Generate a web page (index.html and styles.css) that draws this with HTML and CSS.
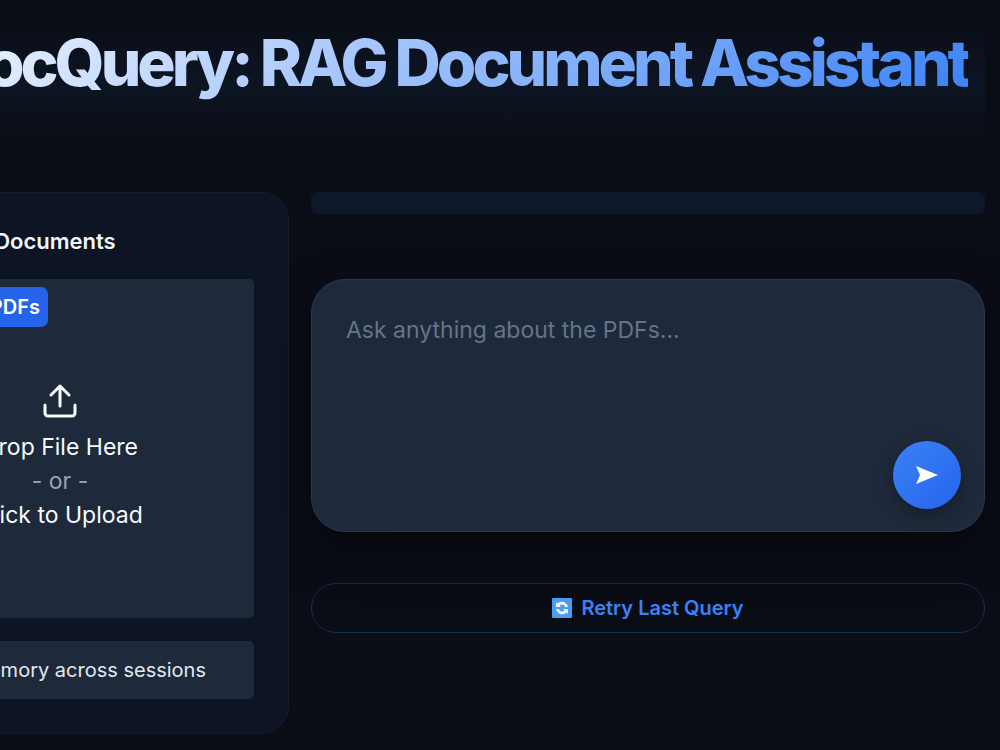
FILE: index.html
```html
<!DOCTYPE html>
<html lang="en">
<head>
    <meta charset="UTF-8">
    <meta name="viewport" content="width=device-width, initial-scale=1.0">
    <title>DocQuery</title>
    <link rel="stylesheet" href="styles.css">
</head>
<body>

<div class="app">
    <header class="hero">
        <h1>DocQuery: RAG Document Assistant</h1>
    </header>

    <div class="columns">
        <!-- Documents panel -->
        <section class="panel">
            <h2>Upload Documents</h2>
            <div class="dropzone">
                <span class="tag">Upload PDFs</span>
                <button class="drop-button" type="button">
                    <svg class="upload-icon" viewBox="0 0 34 34" fill="none" stroke="currentColor" stroke-width="3" stroke-linecap="round" stroke-linejoin="round">
                        <path d="M17 22V3M8 11l9-9 9 9M2 21v8a3 3 0 0 0 3 3h24a3 3 0 0 0 3-3v-8"/>
                    </svg>
                    <span>Drop File Here</span>
                    <span class="or">- or -</span>
                    <span>Click to Upload</span>
                </button>
            </div>
            <label class="memory">
                <input type="checkbox">
                <span>Enable memory across sessions</span>
            </label>
        </section>

        <!-- Chat -->
        <main class="chat">
            <div class="answer"></div>
            <div class="composer">
                <textarea placeholder="Ask anything about the PDFs..." aria-label="Question"></textarea>
                <button class="send" type="button" aria-label="Send">
                    <svg viewBox="0 0 22 18"><path d="M0 0L22 9L0 18Q2 14 4 9Q2 4 0 0Z" fill="#fff"/></svg>
                </button>
            </div>
            <button class="retry" type="button">
                <svg class="retry-icon" viewBox="0 0 20 20">
                    <rect width="20" height="20" rx="1" fill="#4a9df0"/>
                    <path d="M4 4v5h5L7.500 7.500C9 6 12 6 13 9h3C15 4 9 2 5.500 5.500ZM16 16v-5h-5l1.500 1.500C11 14 8 14 7 11H4c1 5 7 7 10.500 3.500Z" fill="#eef6ff"/>
                </svg>
                <span>Retry Last Query</span>
            </button>
        </main>
    </div>
</div>

</body>
</html>
```
FILE: styles.css
```css
* {
    box-sizing: border-box;
}
body {
    margin: 0;
    min-height: 100vh;
    overflow: hidden;
    font-family: Inter, sans-serif;
    background-color: #0a0d16;
    color: #f1f5f9;
}
button, textarea {
    font-family: inherit;
}
button {
    cursor: pointer;
}
.app {
    margin: 0 15px 0 -169px;
}
.hero {
    height: 192px;
    padding: 24px 17px 0;
    background: linear-gradient(transparent 20px, #0d1523 86px, transparent 142px);
}
.hero h1 {
    margin: 0;
    font-size: 64px;
    line-height: 78px;
    font-weight: 800;
    letter-spacing: -4px;
    text-align: right;
    white-space: nowrap;
    color: transparent;
    background: linear-gradient(135deg, #ffffff, #3b82f6);
    background-clip: text;
    -webkit-background-clip: text;
}
.columns {
    display: flex;
    align-items: flex-start;
    gap: 22px;
}
.panel {
    flex: 0 0 458px;
    display: flex;
    flex-direction: column;
    padding: 34px;
    border: 1px solid #151d2c;
    border-radius: 28px;
    background-color: #0d1424;
}
.panel h2 {
    margin: 0 0 24px;
    padding-left: 47px;
    font-size: 22px;
    line-height: 28px;
    font-weight: 600;
}
.dropzone {
    position: relative;
    display: flex;
    height: 339px;
    border-radius: 5px;
    background-color: #1e293b;
}
.tag {
    position: absolute;
    top: 8px;
    left: 8px;
    padding: 0 8px 0 42px;
    border-radius: 7px;
    font-size: 20px;
    line-height: 40px;
    font-weight: 600;
    color: #fff;
    background-color: #2563eb;
}
.drop-button {
    flex: 1;
    display: flex;
    flex-direction: column;
    align-items: center;
    justify-content: center;
    padding: 18px 0 0;
    border: none;
    background: none;
    color: #f8fafc;
    font-size: 23px;
    line-height: 34px;
}
.upload-icon {
    width: 34px;
    height: 34px;
    margin-bottom: 12px;
}
.or {
    color: #94a3b8;
}
.memory {
    display: flex;
    align-items: center;
    gap: 8px;
    margin-top: 23px;
    padding: 0 8px;
    height: 58px;
    border-radius: 5px;
    font-size: 20px;
    white-space: nowrap;
    color: #e2e8f0;
    background-color: #1e293b;
}
.memory input {
    width: 20px;
    height: 20px;
    margin: 0;
}
.chat {
    flex: 1;
    display: flex;
    flex-direction: column;
}
.answer {
    height: 22px;
    border-radius: 6px;
    background-color: #0f172a;
}
.composer {
    position: relative;
    display: flex;
    margin: 65px 0 51px;
    border-radius: 34px;
    box-shadow: 0 20px 50px rgba(0, 0, 0, 0.4);
}
.composer textarea {
    flex: 1;
    height: 253px;
    padding: 34px;
    border: 1px solid #2c3749;
    border-radius: 34px;
    outline: none;
    resize: none;
    font-size: 23px;
    line-height: 32px;
    color: #f1f5f9;
    background-color: #1e293b;
}
.composer textarea::placeholder {
    color: #64748b;
}
.send {
    position: absolute;
    right: 24px;
    bottom: 23px;
    display: flex;
    align-items: center;
    justify-content: center;
    width: 68px;
    height: 68px;
    padding: 0;
    border: none;
    border-radius: 50%;
    background: linear-gradient(135deg, #3b82f6, #2563eb);
    box-shadow: 0 6px 18px rgba(0, 0, 0, 0.3);
}
.send svg {
    width: 22px;
    height: 18px;
}
.retry {
    display: flex;
    align-items: center;
    justify-content: center;
    gap: 9px;
    height: 50px;
    border: 1px solid #172b55;
    border-radius: 25px;
    font-size: 20px;
    font-weight: 600;
    color: #3b82f6;
    background: none;
}
.retry-icon {
    width: 20px;
    height: 20px;
}
```
